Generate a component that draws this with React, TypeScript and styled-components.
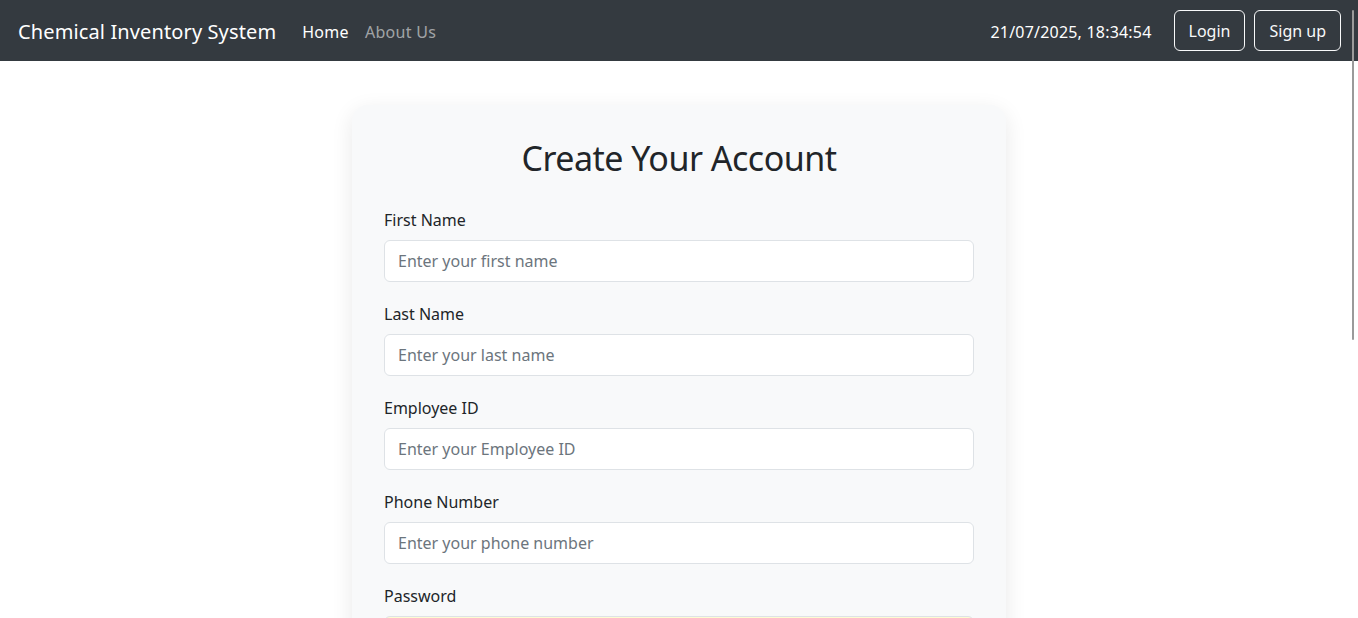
import React from "react";
import styled, { createGlobalStyle } from "styled-components";

const FONT = `"Noto Sans", "Open Sans", "Liberation Sans", sans-serif`;

const GlobalStyle = createGlobalStyle`
  html { scrollbar-width: none; }
  html::-webkit-scrollbar { display: none; }
  body {
    margin: 0;
    font-family: ${FONT};
    font-size: 16px;
    line-height: 1.5;
    color: #212529;
    background: #ffffff;
  }
  * { box-sizing: border-box; }
`;

const Navbar = styled.nav`
  height: 61px;
  background: #343a40;
  display: flex;
  align-items: center;
  justify-content: space-between;
  padding: 0 17px 0 18px;
`;

const NavLeft = styled.div`
  display: flex;
  align-items: center;
  padding-top: 2px;
`;

const Brand = styled.a`
  font-size: 20px;
  letter-spacing: 0.12px;
  color: #ffffff;
  text-decoration: none;
  margin-right: 18px;
  line-height: 30px;
`;

const NavLink = styled.a<{ $active?: boolean }>`
  color: ${(p) => (p.$active ? "#ffffff" : "rgba(255,255,255,0.55)")};
  text-decoration: none;
  padding: 8px;
  letter-spacing: 0.3px;
`;

const NavRight = styled.div`
  display: flex;
  align-items: center;
`;

const Clock = styled.span`
  color: #ffffff;
  margin-right: 13px;
  letter-spacing: 0.2px;
  padding-top: 2px;
`;

const OutlineButton = styled.button`
  font-family: ${FONT};
  font-size: 16px;
  line-height: 24px;
  color: #f8f9fa;
  background: transparent;
  border: 1px solid #f8f9fa;
  border-radius: 6px;
  padding: 8px 14px 7px;
  margin-left: 9px;
  cursor: pointer;
`;

const Main = styled.main`
  display: flex;
  justify-content: center;
  padding: 44px 0 48px;
`;

const Card = styled.div`
  width: 654px;
  background: #f8f9fa;
  border-radius: 16px;
  box-shadow: 0 6px 22px rgba(0, 0, 0, 0.09);
  padding: 32px;
`;

const Title = styled.h2`
  margin: 0 0 28px;
  font-size: 34px;
  letter-spacing: -0.5px;
  font-weight: 400;
  line-height: 43px;
  text-align: center;
  color: #212529;
`;

const Group = styled.div`
  margin-bottom: 20px;
`;

const Label = styled.label`
  display: block;
  margin-bottom: 8px;
  line-height: 24px;
  color: #212529;
`;

const Input = styled.input<{ $autofill?: boolean }>`
  display: block;
  width: 100%;
  height: 42px;
  padding: 8px 13px;
  font-family: ${FONT};
  font-size: 16px;
  color: #212529;
  background: ${(p) => (p.$autofill ? "#fdfcd3" : "#ffffff")};
  border: 1px solid #dee2e6;
  border-radius: 6px;
  outline: none;
  &::placeholder { color: #6c757d; }
`;

const SubmitButton = styled.button`
  width: 100%;
  font-family: ${FONT};
  font-size: 16px;
  line-height: 24px;
  padding: 8px 12px;
  color: #fff;
  background: #0d6efd;
  border: 1px solid #0d6efd;
  border-radius: 6px;
  margin-top: 8px;
`;

const ScrollThumb = styled.div`
  position: fixed;
  top: 10px;
  right: 4px;
  width: 2px;
  height: 330px;
  background: #9a9a9a;
  border-radius: 1px;
`;

const fields = [
  { label: "First Name", placeholder: "Enter your first name", type: "text" },
  { label: "Last Name", placeholder: "Enter your last name", type: "text" },
  { label: "Employee ID", placeholder: "Enter your Employee ID", type: "text" },
  { label: "Phone Number", placeholder: "Enter your phone number", type: "tel" },
  { label: "Password", placeholder: "Enter your password", type: "password", autofill: true },
  { label: "Confirm Password", placeholder: "Confirm your password", type: "password", autofill: true },
];

export default function App() {
  return (
    <>
      <GlobalStyle />
      <Navbar>
        <NavLeft>
          <Brand href="#">Chemical Inventory System</Brand>
          <NavLink href="#" $active>Home</NavLink>
          <NavLink href="#">About Us</NavLink>
        </NavLeft>
        <NavRight>
          <Clock>21/07/2025, 18:34:54</Clock>
          <OutlineButton>Login</OutlineButton>
          <OutlineButton>Sign up</OutlineButton>
        </NavRight>
      </Navbar>
      <Main>
        <Card>
          <Title>Create Your Account</Title>
          {fields.map((f) => (
            <Group key={f.label}>
              <Label>{f.label}</Label>
              <Input type={f.type} placeholder={f.placeholder} $autofill={f.autofill} />
            </Group>
          ))}
          <SubmitButton>Sign Up</SubmitButton>
        </Card>
      </Main>
      <ScrollThumb />
    </>
  );
}
